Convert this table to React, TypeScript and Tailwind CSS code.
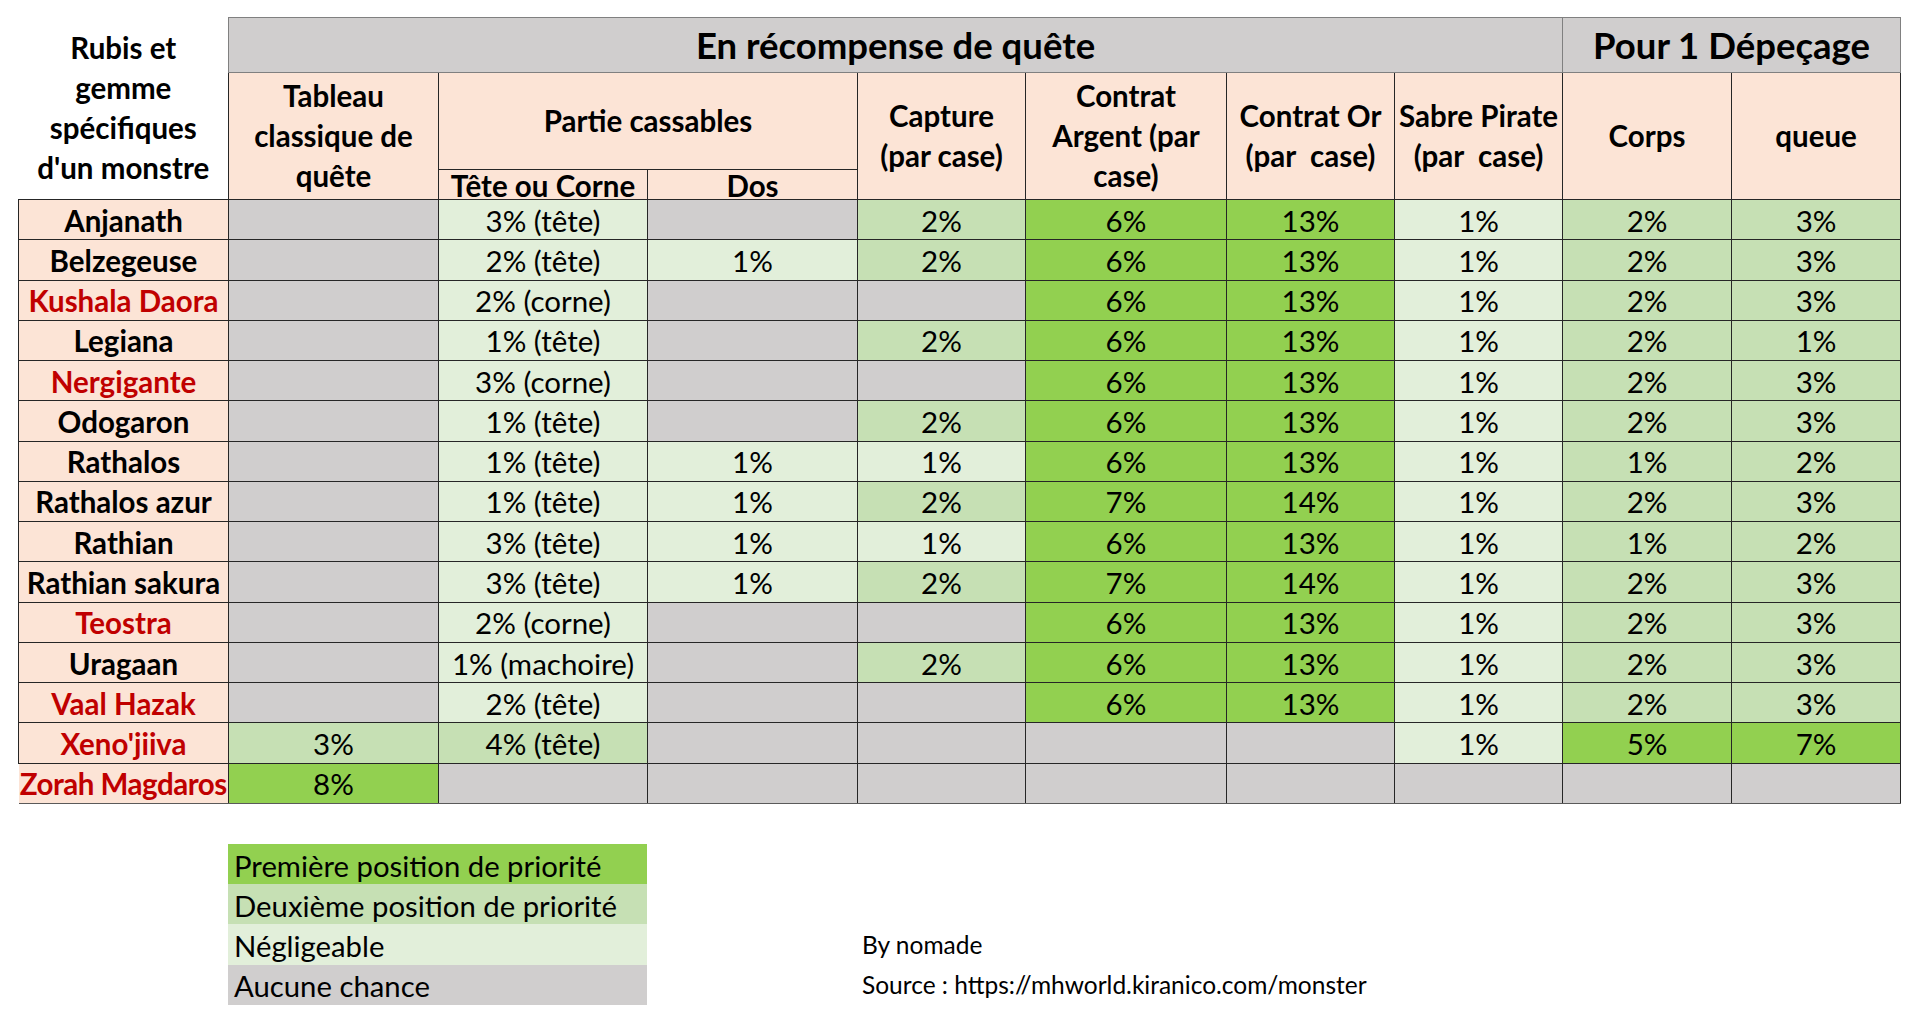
type Tone = "g" | "l" | "m" | "d";
type Cell = [Tone, string?];

const tone: Record<Tone, string> = {
  g: "bg-[#d0cece]",
  l: "bg-[#e2efda]",
  m: "bg-[#c6e0b4]",
  d: "bg-[#92d050]",
};

const rows: { name: string; red?: boolean; cells: Cell[] }[] = [
  { name: "Anjanath", cells: [["g"], ["l", "3% (tête)"], ["g"], ["m", "2%"], ["d", "6%"], ["d", "13%"], ["l", "1%"], ["m", "2%"], ["m", "3%"]] },
  { name: "Belzegeuse", cells: [["g"], ["l", "2% (tête)"], ["l", "1%"], ["m", "2%"], ["d", "6%"], ["d", "13%"], ["l", "1%"], ["m", "2%"], ["m", "3%"]] },
  { name: "Kushala Daora", red: true, cells: [["g"], ["l", "2% (corne)"], ["g"], ["g"], ["d", "6%"], ["d", "13%"], ["l", "1%"], ["m", "2%"], ["m", "3%"]] },
  { name: "Legiana", cells: [["g"], ["l", "1% (tête)"], ["g"], ["m", "2%"], ["d", "6%"], ["d", "13%"], ["l", "1%"], ["m", "2%"], ["m", "1%"]] },
  { name: "Nergigante", red: true, cells: [["g"], ["l", "3% (corne)"], ["g"], ["g"], ["d", "6%"], ["d", "13%"], ["l", "1%"], ["m", "2%"], ["m", "3%"]] },
  { name: "Odogaron", cells: [["g"], ["l", "1% (tête)"], ["g"], ["m", "2%"], ["d", "6%"], ["d", "13%"], ["l", "1%"], ["m", "2%"], ["m", "3%"]] },
  { name: "Rathalos", cells: [["g"], ["l", "1% (tête)"], ["l", "1%"], ["l", "1%"], ["d", "6%"], ["d", "13%"], ["l", "1%"], ["m", "1%"], ["m", "2%"]] },
  { name: "Rathalos azur", cells: [["g"], ["l", "1% (tête)"], ["l", "1%"], ["m", "2%"], ["d", "7%"], ["d", "14%"], ["l", "1%"], ["m", "2%"], ["m", "3%"]] },
  { name: "Rathian", cells: [["g"], ["l", "3% (tête)"], ["l", "1%"], ["l", "1%"], ["d", "6%"], ["d", "13%"], ["l", "1%"], ["m", "1%"], ["m", "2%"]] },
  { name: "Rathian sakura", cells: [["g"], ["l", "3% (tête)"], ["l", "1%"], ["m", "2%"], ["d", "7%"], ["d", "14%"], ["l", "1%"], ["m", "2%"], ["m", "3%"]] },
  { name: "Teostra", red: true, cells: [["g"], ["l", "2% (corne)"], ["g"], ["g"], ["d", "6%"], ["d", "13%"], ["l", "1%"], ["m", "2%"], ["m", "3%"]] },
  { name: "Uragaan", cells: [["g"], ["l", "1% (machoire)"], ["g"], ["m", "2%"], ["d", "6%"], ["d", "13%"], ["l", "1%"], ["m", "2%"], ["m", "3%"]] },
  { name: "Vaal Hazak", red: true, cells: [["g"], ["l", "2% (tête)"], ["g"], ["g"], ["d", "6%"], ["d", "13%"], ["l", "1%"], ["m", "2%"], ["m", "3%"]] },
  { name: "Xeno'jiiva", red: true, cells: [["m", "3%"], ["m", "4% (tête)"], ["g"], ["g"], ["g"], ["g"], ["l", "1%"], ["d", "5%"], ["d", "7%"]] },
];

const colWidths = ["w-[210px]", "w-[210px]", "w-[209px]", "w-[210px]", "w-[168px]", "w-[201px]", "w-[168px]", "w-[168px]", "w-[169px]", "w-[169px]"];

const peach = "bg-[#fce4d6] border border-[#262626] p-0 font-bold leading-[40px]";

export default function App() {
  return (
    <div className="min-h-screen bg-white pl-[18px] pt-[17px] font-[family-name:Lato,sans-serif] text-black">
      <table className="w-[1882px] table-fixed border-collapse text-[29.5px] leading-[36px]">
        <colgroup>
          {colWidths.map((w, i) => (
            <col key={i} className={w} />
          ))}
        </colgroup>
        <thead>
          <tr className="h-[55px]">
            <th rowSpan={3} className="bg-white p-0 text-center align-middle font-bold leading-[40px]">
              Rubis et<br />gemme<br />spécifiques<br />d'un monstre
            </th>
            <th colSpan={7} className="border border-[#808080] bg-[#d0cece] p-0 text-center text-[36.5px] font-bold leading-[44px]">
              En récompense de quête
            </th>
            <th colSpan={2} className="border border-[#808080] bg-[#d0cece] p-0 text-center text-[36.5px] font-bold leading-[44px]">
              Pour 1 Dépeçage
            </th>
          </tr>
          <tr className="h-[97px]">
            <th rowSpan={2} className={peach}>
              Tableau<br />classique de<br />quête
            </th>
            <th colSpan={2} className={peach}>
              Partie cassables
            </th>
            <th rowSpan={2} className={peach}>
              Capture<br />(par case)
            </th>
            <th rowSpan={2} className={peach}>
              Contrat<br />Argent (par<br />case)
            </th>
            <th rowSpan={2} className={peach}>
              Contrat Or<br />(par&nbsp; case)
            </th>
            <th rowSpan={2} className={peach}>
              Sabre Pirate<br />(par&nbsp; case)
            </th>
            <th rowSpan={2} className={peach}>
              Corps
            </th>
            <th rowSpan={2} className={peach}>
              queue
            </th>
          </tr>
          <tr className="h-[30px]">
            <th className="border border-[#262626] bg-[#fce4d6] p-0 pt-[3px] font-bold leading-[26px]">Tête ou Corne</th>
            <th className="border border-[#262626] bg-[#fce4d6] p-0 pt-[3px] font-bold leading-[26px]">Dos</th>
          </tr>
        </thead>
        <tbody>
          {rows.map((row) => (
            <tr key={row.name} className="h-[40.27px]">
              <td
                className={`border border-[#262626] bg-[#fce4d6] p-0 pt-[2px] text-center font-bold ${
                  row.red ? "text-[#c00000]" : "text-black"
                }`}
              >
                {row.name}
              </td>
              {row.cells.map(([t, v], i) => (
                <td key={i} className={`border border-[#262626] p-0 pt-[2px] text-center ${tone[t]}`}>
                  {v}
                </td>
              ))}
            </tr>
          ))}
          <tr className="h-[40.27px]">
            <td className="overflow-hidden whitespace-nowrap border-b border-b-[#5a5a5a] bg-[#fce4d6] p-0 pt-[2px] text-center font-bold tracking-[-0.5px] text-[#c00000]">
              Zorah Magdaros
            </td>
            <td className="border border-[#262626] border-b-[#5a5a5a] bg-[#92d050] p-0 pt-[2px] text-center">8%</td>
            {Array.from({ length: 8 }).map((_, i) => (
              <td key={i} className="border border-[#262626] border-b-[#5a5a5a] bg-[#d0cece] p-0" />
            ))}
          </tr>
        </tbody>
      </table>

      <div className="ml-[210px] mt-[40px] grid grid-cols-[419px_210px_auto] grid-rows-[repeat(4,40.25px)] leading-[36px]">
        <div className="flex items-center bg-[#92d050] px-[6px] pt-[3px] text-[29.3px]">Première position de priorité</div>
        <div />
        <div />
        <div className="flex items-center bg-[#c6e0b4] px-[6px] pt-[3px] text-[29.3px]">Deuxième position de priorité</div>
        <div />
        <div />
        <div className="flex items-center bg-[#e2efda] px-[6px] pt-[3px] text-[29.3px]">Négligeable</div>
        <div />
        <div className="flex items-center pl-[5px] text-[24.5px]">By nomade</div>
        <div className="flex items-center bg-[#d0cece] px-[6px] pt-[3px] text-[29.3px]">Aucune chance</div>
        <div />
        <div className="flex items-center pl-[5px] text-[24.5px]">Source : https://mhworld.kiranico.com/monster</div>
      </div>
    </div>
  );
}
